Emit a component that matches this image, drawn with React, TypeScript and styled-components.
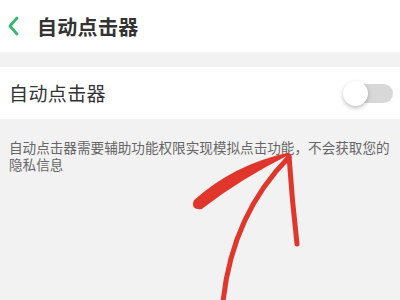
import React from "react";
import styled, { createGlobalStyle } from "styled-components";

const Global = createGlobalStyle`
  html, body { margin: 0; padding: 0; }
  body {
    width: 400px; height: 300px; overflow: hidden;
    background: #f2f2f2;
    font-family: "Noto Sans CJK SC", "Noto Sans", sans-serif;
  }
`;

const Page = styled.div`
  position: relative;
  width: 400px;
  height: 300px;
  background: #f2f2f2;
  display: flex;
  flex-direction: column;
`;

const Header = styled.div`
  height: 52px;
  background: #ffffff;
  display: flex;
  align-items: center;
  padding-left: 6px;
  gap: 15px;
  box-sizing: border-box;
`;

const Title = styled.div`
  font-size: 20px;
  font-weight: 700;
  color: #333333;
  letter-spacing: 0.3px;
`;

const Row = styled.div`
  margin-top: 15px;
  height: 52px;
  background: #ffffff;
  display: flex;
  align-items: center;
  justify-content: space-between;
  padding: 0 7px 0 9px;
`;

const Label = styled.div`
  font-size: 19px;
  color: #333333;
  letter-spacing: 0.4px;
  margin-top: -1px;
`;

const Track = styled.div`
  position: relative;
  width: 46px;
  height: 19px;
  border-radius: 10px;
  background: #d8d8d8;
`;

const Knob = styled.div`
  position: absolute;
  left: -4px;
  top: -3px;
  width: 25px;
  height: 25px;
  border-radius: 50%;
  background: #ffffff;
  box-shadow: 0 2px 4px rgba(0, 0, 0, 0.25);
`;

const Desc = styled.div`
  padding: 20px 8px 0 9px;
  font-size: 13.6px;
  line-height: 17px;
  color: #666666;
`;

const Overlay = styled.svg`
  position: absolute;
  left: 0;
  top: 0;
  pointer-events: none;
`;

export default function App() {
  return (
    <Page>
      <Global />
      <Header>
        <svg width="16" height="22" viewBox="0 0 16 22">
          <path d="M11 3 L4 11 L11 19" fill="none" stroke="#35b86e" strokeWidth="2.8" strokeLinecap="round" strokeLinejoin="round" />
        </svg>
        <Title>自动点击器</Title>
      </Header>
      <Row>
        <Label>自动点击器</Label>
        <Track>
          <Knob />
        </Track>
      </Row>
      <Desc>自动点击器需要辅助功能权限实现模拟点击功能，不会获取您的隐私信息</Desc>
      <Overlay width="400" height="300" viewBox="0 0 400 300">
        <path d="M195 201 Q234 166 288 154 Q240 178 201 208 Q192 209 195 201 Z" fill="#e0362b" stroke="#e0362b" strokeWidth="2.5" strokeLinejoin="round" />
        <path d="M223 302 Q232 215 289 157" fill="none" stroke="#e0362b" strokeWidth="5" strokeLinecap="round" />
        <path d="M289 156 Q292 200 297 244" fill="none" stroke="#e0362b" strokeWidth="5" strokeLinecap="round" />
      </Overlay>
    </Page>
  );
}
